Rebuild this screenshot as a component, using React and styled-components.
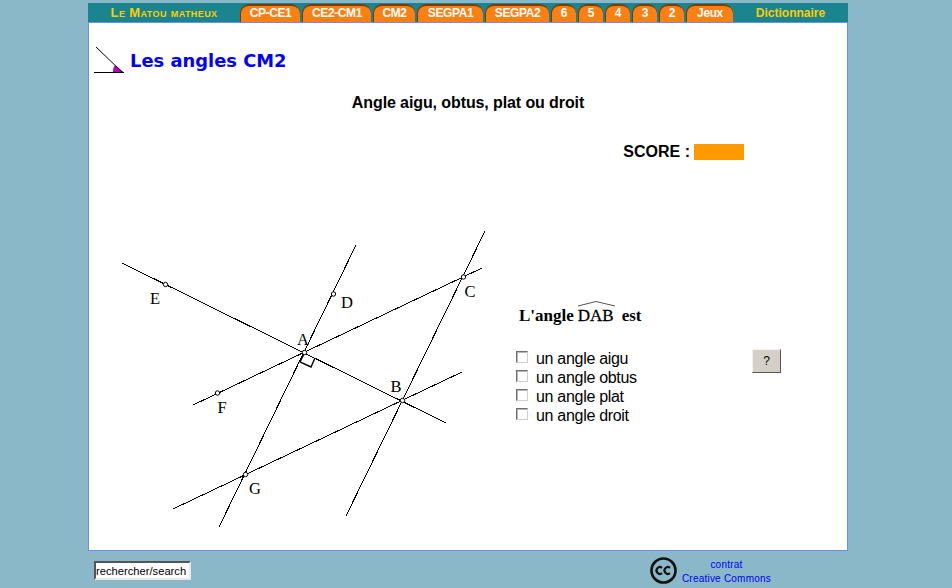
import React from "react";
import styled, { createGlobalStyle } from "styled-components";

const Global = createGlobalStyle`
  html, body { margin: 0; padding: 0; background: #8ab8c8; }
  body { font-family: "Liberation Sans", Arial, sans-serif; color: #000; overflow: hidden; }
`;

const Page = styled.div`
  width: 760px;
  margin-left: 88px;
  padding-top: 3px;
`;

const Nav = styled.nav`
  display: flex;
  height: 19px;
  background: #1a858f;
  font-size: 12px;
  font-weight: bold;
`;

const Brand = styled.a`
  width: 152px;
  text-align: center;
  line-height: 20px;
  color: #ffcc00;
  font-size: 13px;
  letter-spacing: 0.4px;
  font-variant: small-caps;
`;

const Tabs = styled.div`
  display: flex;
  gap: 2px;
  padding-top: 1px;
`;

const Tab = styled.a`
  box-sizing: border-box;
  width: ${(p) => p.$width}px;
  height: 18px;
  background: #fb7f12;
  color: #fff;
  letter-spacing: -0.4px;
  line-height: 15px;
  text-align: center;
  border-top: 2px solid #7a3d00;
  border-left: 1px solid #7a3d00;
  border-radius: 9px 9px 0 0;
`;

const Dictionary = styled.a`
  flex: 1;
  text-align: center;
  line-height: 20px;
  color: #ffcc00;
`;

const Panel = styled.main`
  box-sizing: border-box;
  height: 529px;
  background: #fff;
  border: 1px solid #6c8fef;
`;

const Header = styled.header`
  display: flex;
  align-items: center;
  gap: 4px;
  height: 30px;
  padding: 22px 0 0 5px;
`;

const Title = styled.h1`
  margin: 1px 0 0;
  font-family: "DejaVu Sans", Verdana, sans-serif;
  font-size: 17.9px;
  font-weight: bold;
  color: #0000ff;
  line-height: 30px;
`;

const Subtitle = styled.h2`
  margin: 18px 0 0;
  font-size: 16px;
  letter-spacing: -0.1px;
  line-height: 19px;
  font-weight: bold;
  text-align: center;
`;

const ScoreRow = styled.div`
  display: flex;
  justify-content: flex-end;
  align-items: center;
  gap: 4px;
  height: 18px;
  margin-top: 31px;
  padding-right: 103px;
  font-size: 16px;
  font-weight: bold;
`;

const ScoreBar = styled.span`
  width: 50px;
  height: 16px;
  background: #ff9900;
`;

const Exercise = styled.section`
  display: flex;
  margin-top: 59px;
  padding-left: 11px;
`;

const Figure = styled.svg`
  display: block;
  flex: none;
  width: 400px;
  height: 310px;
`;

const Label = styled.text`
  font-family: "Liberation Serif", "Times New Roman", serif;
  font-size: 16.5px;
  text-anchor: middle;
`;

const Side = styled.div`
  width: 265px;
  margin-left: 16px;
  padding-top: 78px;
`;

const Question = styled.div`
  display: flex;
  align-items: flex-end;
  height: 28px;
  padding-left: 3px;
  font-family: "Liberation Serif", "Times New Roman", serif;
  font-size: 17px;
  font-weight: bold;
  line-height: 20px;
`;

const Angle = styled.span`
  position: relative;
  margin: 0 8px 0 4px;
  font-weight: normal;
  -webkit-text-stroke: 0.3px #000;
`;

const Hat = styled.svg`
  position: absolute;
  left: 0;
  top: -5px;
  width: 37px;
  height: 6px;
`;

const Answers = styled.div`
  display: flex;
  justify-content: space-between;
  align-items: flex-start;
  margin-top: 23px;
`;

const Options = styled.div`
  display: flex;
  flex-direction: column;
`;

const Option = styled.label`
  display: flex;
  align-items: center;
  gap: 8px;
  height: 19px;
  font-size: 16px;
  letter-spacing: -0.3px;
  line-height: 19px;
`;

const Check = styled.input`
  appearance: none;
  box-sizing: border-box;
  width: 12px;
  height: 12px;
  margin: 0 0 3px;
  background: #fff;
  border: 1px solid;
  border-color: #6f6f6f #cfcfcf #cfcfcf #6f6f6f;
  box-shadow: inset 1px 1px 0 #b5b5b5;
`;

const HelpButton = styled.button`
  box-sizing: border-box;
  width: 29px;
  height: 24px;
  padding: 0;
  background: #d4d0c8;
  border: 1px solid;
  border-color: #f4f2ee #555 #555 #f4f2ee;
  font-family: "Liberation Sans", Arial, sans-serif;
  font-size: 12px;
  color: #000;
`;

const Footer = styled.footer`
  display: flex;
  justify-content: space-between;
  padding: 5px 77px 0 6px;
`;

const Search = styled.input`
  box-sizing: border-box;
  width: 97px;
  height: 19px;
  margin-top: 5px;
  padding: 0;
  background: #fff;
  border: 2px solid;
  border-color: #555 #e8e8e8 #e8e8e8 #555;
  font-family: "Liberation Sans", Arial, sans-serif;
  font-size: 11.2px;
  color: #000;
`;

const License = styled.div`
  display: flex;
  align-items: flex-start;
  gap: 5px;
`;

const CcLogo = styled.svg`
  display: block;
  width: 27px;
  height: 27px;
  margin-top: 1px;
`;

const ContractLinks = styled.div`
  padding-top: 2px;
`;

const ContractLink = styled.a`
  display: block;
  color: #0000ff;
  font-size: 10px;
  letter-spacing: 0.22px;
  line-height: 14px;
  text-align: center;
`;

const lines = [
  [122, 263, 446, 423],
  [356, 245, 219, 527],
  [193, 405, 482, 268],
  [485, 231, 346, 516],
  [173, 509, 462, 372],
];
const points = [
  [165.5, 284.5], [333.5, 294], [304.5, 352.5], [463.5, 277], [402.5, 400.5], [245.5, 474.5], [217.5, 393],
];
const labels = [
  ["E", 155, 304], ["D", 347, 308], ["A", 303, 345], ["C", 470, 297],
  ["B", 396, 392], ["F", 222, 413], ["G", 255, 494],
];
const tabs = [
  ["CP-CE1", 60], ["CE2-CM1", 69], ["CM2", 42], ["SEGPA1", 66], ["SEGPA2", 64],
  ["6", 25], ["5", 25], ["4", 25], ["3", 25], ["2", 25], ["Jeux", 47],
];
const options = ["un angle aigu", "un angle obtus", "un angle plat", "un angle droit"];

export default function App() {
  return (
    <Page>
      <Global />
      <Nav>
        <Brand>Le Matou matheux</Brand>
        <Tabs>
          {tabs.map(([t, w]) => <Tab key={t} $width={w}>{t}</Tab>)}
        </Tabs>
        <Dictionary>Dictionnaire</Dictionary>
      </Nav>
      <Panel>
        <Header>
          <svg width="32" height="30" viewBox="94 45 32 30">
            <path d="M115 65 L123.5 72 L113 72 Q112.5 68 115 65 Z" fill="#b800b8" stroke="none" />
            <path d="M96 47 L122 72" stroke="#000" strokeWidth="1" fill="none" />
            <path d="M94 72.5 H124" stroke="#000" strokeWidth="1" fill="none" />
          </svg>
          <Title>Les angles CM2</Title>
        </Header>
        <Subtitle>Angle aigu, obtus, plat ou droit</Subtitle>
        <ScoreRow>
          <span>SCORE :</span>
          <ScoreBar />
        </ScoreRow>
        <Exercise>
          <Figure viewBox="100 220 400 310">
            <g stroke="#000" strokeWidth="1" fill="none" shapeRendering="crispEdges">
              {lines.map(([a, b, c, d]) => <line key={`${a}-${b}`} x1={a} y1={b} x2={c} y2={d} />)}
            </g>
            <path d="M304 354 L300 362 L311 367 L315 358" stroke="#000" strokeWidth="1.4" fill="none" />
            {points.map(([x, y]) => (
              <circle key={`${x}-${y}`} cx={x} cy={y} r="2.2" fill="#fff" stroke="#000" strokeWidth="1" />
            ))}
            {labels.map(([t, x, y]) => <Label key={t} x={x} y={y}>{t}</Label>)}
          </Figure>
          <Side>
            <Question>
              <span>L'angle</span>
              <Angle>
                <Hat viewBox="0 0 37 6">
                  <path d="M0 5 L18 0.5 L37 5" stroke="#555" strokeWidth="1" fill="none" />
                </Hat>
                DAB
              </Angle>
              <span>est</span>
            </Question>
            <Answers>
              <Options>
                {options.map((o) => (
                  <Option key={o}>
                    <Check type="checkbox" />
                    {o}
                  </Option>
                ))}
              </Options>
              <HelpButton>?</HelpButton>
            </Answers>
          </Side>
        </Exercise>
      </Panel>
      <Footer>
        <Search defaultValue="rechercher/search" />
        <License>
          <CcLogo viewBox="0 0 27 27">
            <circle cx="13.5" cy="13.5" r="12" fill="none" stroke="#111" strokeWidth="2.6" />
            <path d="M12 10.8 A3.4 3.4 0 1 0 12 16.2" fill="none" stroke="#111" strokeWidth="2.2" />
            <path d="M20 10.8 A3.4 3.4 0 1 0 20 16.2" fill="none" stroke="#111" strokeWidth="2.2" />
          </CcLogo>
          <ContractLinks>
            <ContractLink>contrat</ContractLink>
            <ContractLink>Creative Commons</ContractLink>
          </ContractLinks>
        </License>
      </Footer>
    </Page>
  );
}
